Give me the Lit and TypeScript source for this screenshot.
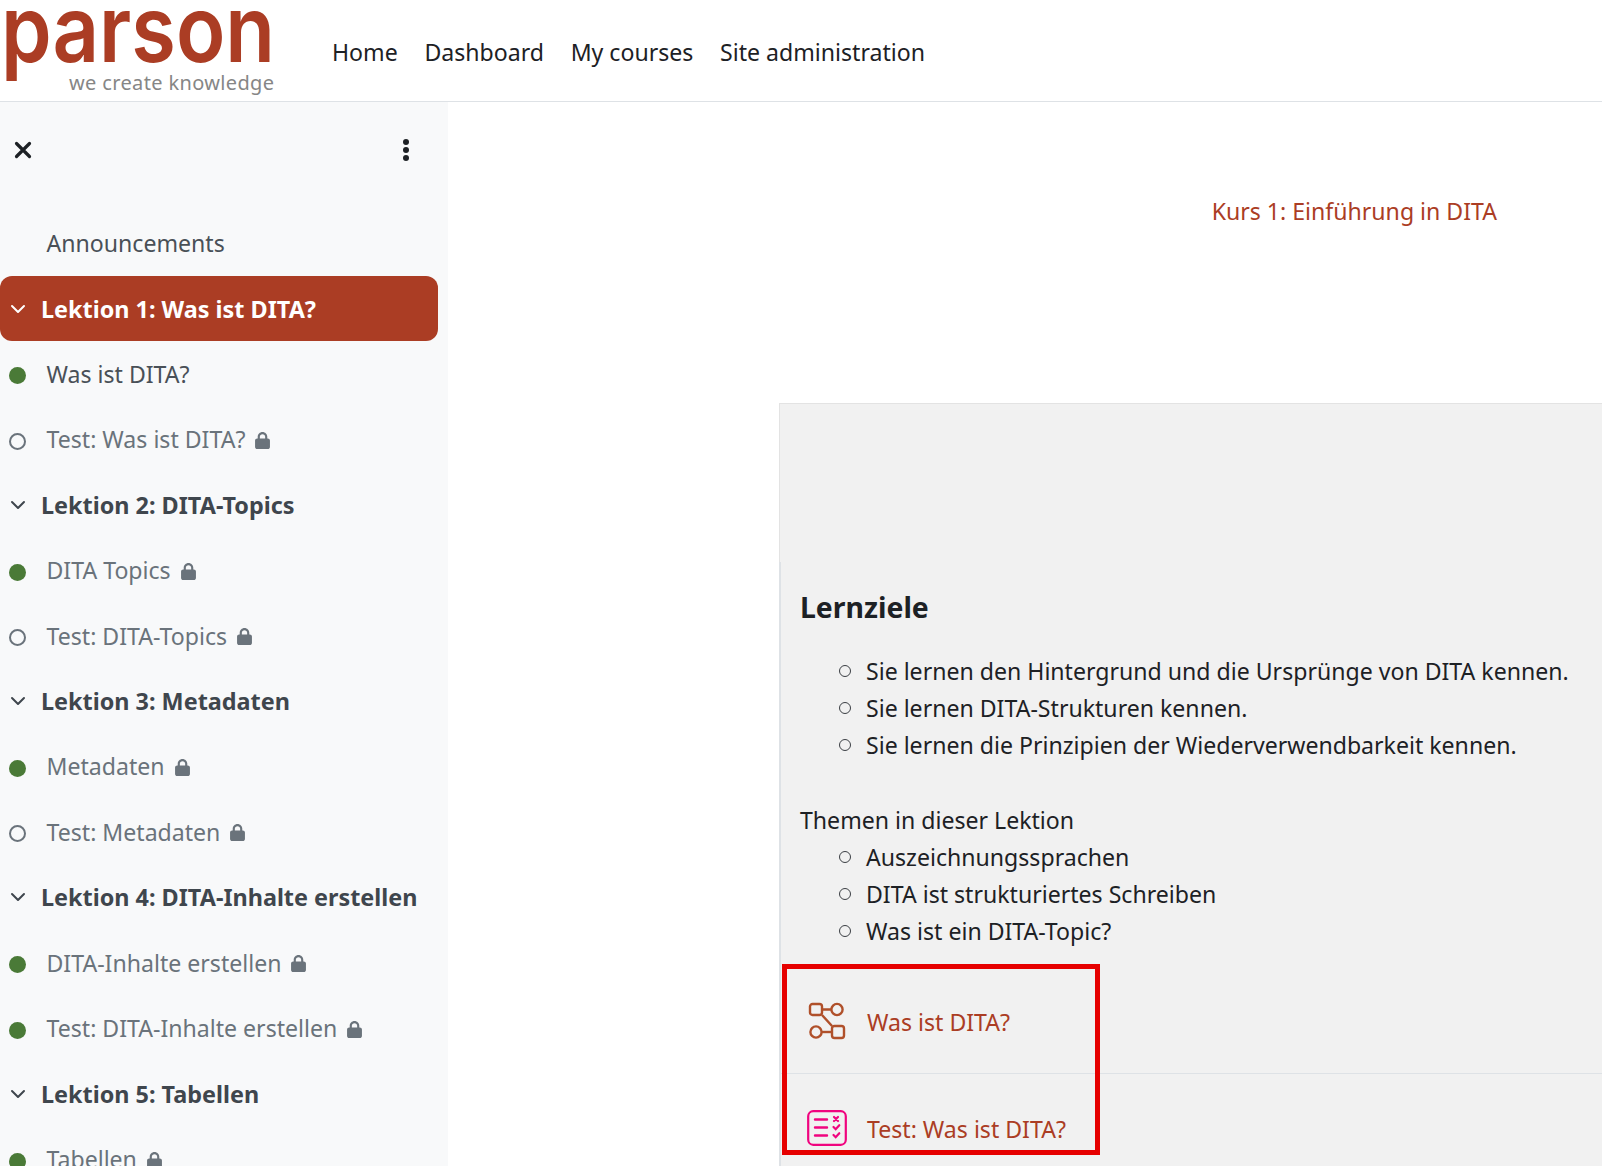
import { LitElement, html, css, svg } from "lit";
import { customElement } from "lit/decorators.js";

type Row =
  | { kind: "plain"; label: string }
  | { kind: "section"; label: string; active?: boolean }
  | { kind: "item"; label: string; done: boolean; locked: boolean };

const ROWS: Row[] = [
  { kind: "plain", label: "Announcements" },
  { kind: "section", label: "Lektion 1: Was ist DITA?", active: true },
  { kind: "item", label: "Was ist DITA?", done: true, locked: false },
  { kind: "item", label: "Test: Was ist DITA?", done: false, locked: true },
  { kind: "section", label: "Lektion 2: DITA-Topics" },
  { kind: "item", label: "DITA Topics", done: true, locked: true },
  { kind: "item", label: "Test: DITA-Topics", done: false, locked: true },
  { kind: "section", label: "Lektion 3: Metadaten" },
  { kind: "item", label: "Metadaten", done: true, locked: true },
  { kind: "item", label: "Test: Metadaten", done: false, locked: true },
  { kind: "section", label: "Lektion 4: DITA-Inhalte erstellen" },
  { kind: "item", label: "DITA-Inhalte erstellen", done: true, locked: true },
  { kind: "item", label: "Test: DITA-Inhalte erstellen", done: true, locked: true },
  { kind: "section", label: "Lektion 5: Tabellen" },
  { kind: "item", label: "Tabellen", done: true, locked: true },
];

const lock = html`<svg class="lock" viewBox="0 0 448 512"><path fill="currentColor" d="M144 144v48H304V144c0-44.2-35.8-80-80-80s-80 35.8-80 80zM80 192V144C80 64.5 144.5 0 224 0s144 64.5 144 144v48h16c35.3 0 64 28.7 64 64V448c0 35.3-28.7 64-64 64H64c-35.3 0-64-28.7-64-64V256c0-35.3 28.7-64 64-64H80z"/></svg>`;
const chevron = html`<svg class="chev" viewBox="0 0 16 10"><path d="M2 2l6 6 6-6" fill="none" stroke="currentColor" stroke-width="2" stroke-linecap="round" stroke-linejoin="round"/></svg>`;

@customElement("app-root")
export class AppRoot extends LitElement {
  static styles = css`
    :host {
      display: block;
      width: 1602px;
      height: 1166px;
      overflow: hidden;
      background: #fff;
      font-family: "Noto Sans", "Open Sans", sans-serif;
      color: #1d2125;
      font-size: 23.1px;
    }
    .nav {
      display: flex;
      align-items: flex-start;
      height: 101px;
      border-bottom: 1px solid #dee2e6;
      box-sizing: content-box;
    }
    .logo { width: 332px; height: 101px; flex: none; display: block; }
    .wordmark { font-family: "Inter", sans-serif; font-weight: 600; font-size: 93px; fill: #ab3d24; }
    .tag { font-family: "Noto Sans", sans-serif; font-size: 20px; fill: #868686; }
    .links { display: flex; gap: 26.7px; padding-top: 35px; line-height: 34px; }
    .body { display: flex; height: 1064px; }
    .side { width: 448px; flex: none; background: #f8f9fa; overflow: hidden; }
    .tools {
      height: 108.4px;
      display: flex;
      align-items: center;
      justify-content: space-between;
      padding: 0 39px 12px 14px;
      box-sizing: border-box;
      color: #1d2125;
    }
    .tools svg { display: block; }
    .row {
      height: 65.43px;
      display: flex;
      align-items: center;
      width: 438px;
      box-sizing: border-box;
      white-space: nowrap;
    }
    .plain, .item { padding-left: 9px; color: #495057; }
    .item.locked { color: #6a737b; }
    .plain { padding-left: 46.5px; }
    .section { padding-left: 10px; color: #3f464d; font-weight: 700; font-size: 23.4px; }
    .section.active {
      background: #ab3d24;
      color: #fff;
      border-radius: 12px;
    }
    .chev { width: 16px; height: 10px; margin-right: 15px; flex: none; }
    .dot { width: 17px; height: 17px; border-radius: 50%; box-sizing: border-box; margin: 4px 20.5px 0 0; flex: none; }
    .dot.done { background: #4a7a37; }
    .dot.todo { border: 2px solid #6a737b; }
    .lock { width: 15px; height: 17px; margin: 2px 0 0 10px; color: #6a737b; flex: none; }
    .main { flex: 1; min-width: 0; display: flex; flex-direction: column; }
    .title { height: 301px; box-sizing: border-box; padding: 92px 105px 0 0; text-align: right; color: #ab3d24; line-height: 35px; }
    .panel {
      flex: 1;
      margin-left: 331px;
      background: #f1f1f1;
      border-top: 1px solid #e3e3e3;
      border-left: 1px solid #e3e3e3;
      position: relative;
      padding-top: 184px;
    }
    .edge { position: absolute; left: -1px; top: 158px; bottom: 0; width: 2px; background: #dee2e6; }
    .content { padding-left: 20px; line-height: 37px; color: #1d2125; }
    h2 { margin: 0 0 27px; font-size: 28.4px; line-height: 38px; font-weight: 700; }
    ul { margin: 0; padding: 0 0 0 66px; list-style: none; }
    li { position: relative; white-space: nowrap; }
    li::before {
      content: "";
      position: absolute;
      left: -27px;
      top: 12px;
      width: 12px;
      height: 12px;
      border: 1.5px solid #3b3f44;
      border-radius: 50%;
      box-sizing: border-box;
    }
    .themen { margin: 38px 0 0; }
    .act { display: flex; align-items: center; color: #ab3d24; white-space: nowrap; }
    .act svg { flex: none; display: block; }
    .act.one {
      height: 107px;
      margin-top: 17px;
      padding: 1px 0 0 28px;
      border-bottom: 1px solid #dee2e6;
      gap: 21px;
      box-sizing: border-box;
    }
    .act.one span { position: relative; top: 1px; }
    .act.two { padding: 36px 0 0 27px; gap: 20px; }
    .act.two span { position: relative; top: 1px; }
    .box {
      position: absolute;
      left: 2px;
      top: 560px;
      width: 318px;
      height: 191px;
      border: 5px solid #e60000;
      box-sizing: border-box;
      pointer-events: none;
    }
  `;

  private renderRow(r: Row) {
    if (r.kind === "plain") return html`<div class="row plain">${r.label}</div>`;
    if (r.kind === "section")
      return html`<div class="row section ${r.active ? "active" : ""}">${chevron}<span>${r.label}</span></div>`;
    return html`<div class="row item ${r.locked ? "locked" : ""}">
      <span class="dot ${r.done ? "done" : "todo"}"></span><span>${r.label}</span>${r.locked ? lock : ""}
    </div>`;
  }

  render() {
    return html`
      <header class="nav">
        <svg class="logo" viewBox="0 0 332 101">
          <text class="wordmark" x="1" y="62" textLength="274" lengthAdjust="spacingAndGlyphs">parson</text>
          <text class="tag" x="69" y="90" textLength="205" lengthAdjust="spacing">we create knowledge</text>
        </svg>
        <nav class="links"><span>Home</span><span>Dashboard</span><span>My courses</span><span>Site administration</span></nav>
      </header>
      <div class="body">
        <aside class="side">
          <div class="tools">
            <svg width="18" height="18" viewBox="0 0 18 18"><path d="M2.5 2.5l13 13M15.5 2.5l-13 13" stroke="currentColor" stroke-width="3.2" stroke-linecap="round"/></svg>
            <svg width="6" height="24" viewBox="0 0 6 24"><circle cx="3" cy="4" r="3" fill="currentColor"/><circle cx="3" cy="12" r="3" fill="currentColor"/><circle cx="3" cy="20" r="3" fill="currentColor"/></svg>
          </div>
          ${ROWS.map((r) => this.renderRow(r))}
        </aside>
        <main class="main">
          <div class="title">Kurs 1: Einführung in DITA</div>
          <section class="panel">
            <div class="edge"></div>
            <div class="content">
              <h2>Lernziele</h2>
              <ul>
                <li>Sie lernen den Hintergrund und die Ursprünge von DITA kennen.</li>
                <li>Sie lernen DITA-Strukturen kennen.</li>
                <li>Sie lernen die Prinzipien der Wiederverwendbarkeit kennen.</li>
              </ul>
              <p class="themen">Themen in dieser Lektion</p>
              <ul>
                <li>Auszeichnungssprachen</li>
                <li>DITA ist strukturiertes Schreiben</li>
                <li>Was ist ein DITA-Topic?</li>
              </ul>
            </div>
            <div class="act one">
              <svg width="38" height="38" viewBox="0 0 38 38" fill="none" stroke="#b0502a" stroke-width="2.4">
                ${svg`<rect x="2" y="2" width="12" height="11" rx="2.5"/><circle cx="29" cy="7.5" r="5.6"/><path d="M14 7.5h9.5M14 13l10 11"/><circle cx="8" cy="30" r="5.6"/><rect x="24" y="24" width="12" height="12" rx="2.5"/><path d="M13.5 30H24"/>`}
              </svg>
              <span>Was ist DITA?</span>
            </div>
            <div class="act two">
              <svg width="40" height="36" viewBox="0 0 40 36" fill="none" stroke="#f0047f" stroke-width="2.2" stroke-linecap="round">
                ${svg`<rect x="1.2" y="1.2" width="37.6" height="33.6" rx="5"/><path d="M8 9.5h12M8 17.5h12M8 25.5h12" stroke-width="2.4"/><path d="M27 7l4 4M31 7l-4 4M26.5 17l2.2 2.2 3.6-4M26.5 25l2.2 2.2 3.6-4"/>`}
              </svg>
              <span>Test: Was ist DITA?</span>
            </div>
            <div class="box"></div>
          </section>
        </main>
      </div>
    `;
  }
}
